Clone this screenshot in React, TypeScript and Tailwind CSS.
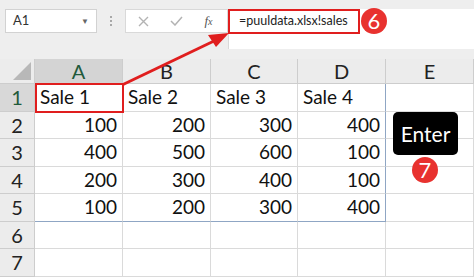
import React from 'react';

const cols = ['A', 'B', 'C', 'D', 'E'];
const rows: (string | number)[][] = [
  ['Sale 1', 'Sale 2', 'Sale 3', 'Sale 4', ''],
  [100, 200, 300, 400, ''],
  [400, 500, 600, 100, ''],
  [200, 300, 400, 100, ''],
  [100, 200, 300, 400, ''],
  ['', '', '', '', ''],
  ['', '', '', '', ''],
];

const font = { fontFamily: 'Lato, "Open Sans", sans-serif' };

const Badge = ({ n, className }: { n: number; className: string }) => (
  <div
    className={`absolute w-[26px] h-[26px] rounded-full bg-[#e8322f] text-white flex items-center justify-center text-[22px] leading-none ${className}`}
    style={font}
  >
    {n}
  </div>
);

export default function App() {
  return (
    <div className="relative w-[474px] h-[278px] overflow-hidden bg-white" style={font}>
      {/* formula toolbar */}
      <div className="h-[59px] bg-[#eeeeee] flex items-start pt-[9px] pl-[5px]">
        <div className="w-[92px] h-[24px] bg-white border border-[#d2d2d2] flex items-center justify-between px-[7px] text-[13px] text-[#333]">
          <span>A1</span>
          <span className="text-[8px] text-[#666]">▼</span>
        </div>
        <div className="w-[28px] h-[24px] flex flex-col items-center justify-center gap-[2px]">
          <span className="w-[2px] h-[2px] bg-[#a8a8a8]" />
          <span className="w-[2px] h-[2px] bg-[#a8a8a8]" />
          <span className="w-[2px] h-[2px] bg-[#a8a8a8]" />
        </div>
        <div className="w-[103px] h-[24px] bg-white border border-[#d9d9d9] flex items-center justify-around pl-[2px] pr-[4px]">
          <svg width="11" height="11" viewBox="0 0 11 11">
            <path d="M1 1L10 10M10 1L1 10" stroke="#b3b3b3" strokeWidth="1.4" />
          </svg>
          <svg width="13" height="10" viewBox="0 0 13 10">
            <path d="M1 5L5 9L12 1" stroke="#b3b3b3" strokeWidth="1.5" fill="none" />
          </svg>
          <span className="text-[13px] italic text-[#555]" style={{ fontFamily: '"Liberation Serif", serif' }}>
            f<span className="text-[10px]">x</span>
          </span>
        </div>
        <div className="flex-1 h-[40px] bg-white border-l border-[#d9d9d9] pl-[10px] pt-[3px] text-[12.5px] text-[#222]">
          =puuldata.xlsx!sales
        </div>
      </div>

      {/* sheet grid */}
      <div className="grid grid-cols-[35px_88px_88px_87px_88px_1fr] grid-rows-[25px_repeat(7,27.5px)] text-[19px] text-[#111]">
        <div className="bg-[#ececec] border-r border-b border-[#cdcdcd] relative">
          <div className="absolute right-[3px] bottom-[3px] w-0 h-0 border-l-[18px] border-l-transparent border-b-[18px] border-b-[#b8b8b8]" />
        </div>
        {cols.map((c) => (
          <div
            key={c}
            className={`flex items-center justify-center border-r border-b border-[#cdcdcd] text-[20px] ${
              c === 'A' ? 'bg-[#d4d4d4] text-[#1f5a3b]' : 'bg-[#ececec] text-[#222]'
            }`}
          >
            {c}
          </div>
        ))}
        {rows.map((r, i) => (
          <React.Fragment key={i}>
            <div
              className={`flex items-center justify-center border-r border-b border-[#cdcdcd] text-[20px] ${
                i === 0 ? 'bg-[#d8d8d8] text-[#1f5a3b]' : 'bg-[#ececec] text-[#222]'
              }`}
            >
              {i + 1}
            </div>
            {r.map((v, j) => (
              <div
                key={j}
                className={`flex items-center px-[5px] border-b border-r ${
                  typeof v === 'number' ? 'justify-end' : 'justify-start'
                } ${j === 3 && i < 5 ? 'border-r-[#8fa6c4]' : 'border-r-[#dadada]'} ${
                  i === 4 && j < 4 ? 'border-b-[#8fa6c4]' : 'border-b-[#dadada]'
                }`}
              >
                {v}
              </div>
            ))}
          </React.Fragment>
        ))}
      </div>

      {/* annotations */}
      <div className="absolute left-[228px] top-[9px] w-[132px] h-[25px] border-2 border-[#e01e1e]" />
      <Badge n={6} className="left-[361px] top-[8px]" />
      <div className="absolute left-[35px] top-[83px] w-[89px] h-[30px] border-2 border-[#e01e1e]" />
      <svg className="absolute left-0 top-0" width="474" height="278">
        <line x1="122" y1="85" x2="214" y2="41" stroke="#e01e1e" strokeWidth="3" />
        <polygon points="229,33 208,35 216,47" fill="#e01e1e" />
      </svg>
      <div
        className="absolute left-[393px] top-[112px] w-[65px] h-[43px] rounded-[5px] bg-black text-white flex items-center justify-center text-[21px]"
        style={font}
      >
        Enter
      </div>
      <Badge n={7} className="left-[412px] top-[157px]" />
    </div>
  );
}
